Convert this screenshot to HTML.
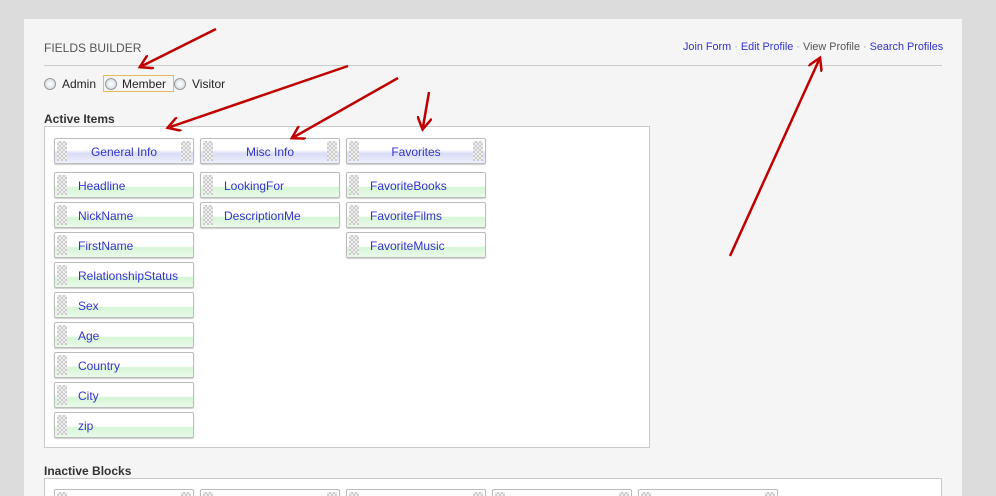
<!DOCTYPE html>
<html style="height:496px;overflow:hidden"><head><style>
body{margin:0;width:996px;height:496px;overflow:hidden;background:#dcdcdc;font-family:"Liberation Sans",sans-serif;position:relative}
.panel{position:absolute;left:24px;top:19px;width:938px;height:477px;background:#f5f5f5}
.t{position:absolute;font-size:12px}
.box{position:absolute;background:#fff;border:1px solid #c8c8c8}
.it{position:absolute;width:138px;height:24px;border:1px solid #bbb;border-radius:2px;box-shadow:0 1px 1px #ccc;font-size:12px;color:#3333cc;line-height:26px;background:linear-gradient(#fff 0%,#fff 55%,#d6f5d6 60%,#eafaea 100%)}
.it .h{position:absolute;left:2px;top:2px;width:10px;height:20px;background:repeating-conic-gradient(#ccc 0 25%,#eee 0 50%) 0 0/4px 4px}
.it span{position:absolute;left:23px}
.hd{background:linear-gradient(#fff 0%,#fff 45%,#d9dcf7 60%,#eef0fc 100%)}
.hd span{left:0;right:0;text-align:center}
.hd .h2{position:absolute;right:2px;top:2px;width:10px;height:20px;background:repeating-conic-gradient(#ccc 0 25%,#eee 0 50%) 0 0/4px 4px}
.rad{position:absolute;width:10px;height:10px;border:1px solid #999;border-radius:50%;background:radial-gradient(#fff,#cdd6e0)}
</style></head><body>
<div class="panel"></div>
<div class="t" style="left:44px;top:41px;color:#555;font-size:12px">FIELDS BUILDER</div>
<div class="t" style="left:683px;top:41px;font-size:10.85px;color:#999"><span style="color:#3333cc">Join Form</span> · <span style="color:#3333cc">Edit Profile</span> · <span style="color:#555">View Profile</span> · <span style="color:#3333cc">Search Profiles</span></div>
<div style="position:absolute;left:44px;top:65px;width:898px;height:1px;background:#ccc"></div>
<div style="position:absolute;left:103px;top:75px;width:69px;height:15px;border:1px solid #e8b860"></div>
<div class="rad" style="left:44px;top:78px"></div>
<div class="t" style="left:62px;top:77px;color:#222">Admin</div>
<div class="rad" style="left:105px;top:78px"></div>
<div class="t" style="left:122px;top:77px;color:#222">Member</div>
<div class="rad" style="left:174px;top:78px"></div>
<div class="t" style="left:192px;top:77px;color:#222">Visitor</div>
<div class="t" style="left:44px;top:112px;font-weight:bold;color:#333">Active Items</div>
<div class="box" style="left:44px;top:126px;width:604px;height:320px"></div>
<div class="it hd" style="left:54px;top:138px"><i class="h"></i><span>General Info</span><i class="h2"></i></div>
<div class="it hd" style="left:200px;top:138px"><i class="h"></i><span>Misc Info</span><i class="h2"></i></div>
<div class="it hd" style="left:346px;top:138px"><i class="h"></i><span>Favorites</span><i class="h2"></i></div>
<div class="it" style="left:54px;top:172px"><i class="h"></i><span>Headline</span></div>
<div class="it" style="left:54px;top:202px"><i class="h"></i><span>NickName</span></div>
<div class="it" style="left:54px;top:232px"><i class="h"></i><span>FirstName</span></div>
<div class="it" style="left:54px;top:262px"><i class="h"></i><span>RelationshipStatus</span></div>
<div class="it" style="left:54px;top:292px"><i class="h"></i><span>Sex</span></div>
<div class="it" style="left:54px;top:322px"><i class="h"></i><span>Age</span></div>
<div class="it" style="left:54px;top:352px"><i class="h"></i><span>Country</span></div>
<div class="it" style="left:54px;top:382px"><i class="h"></i><span>City</span></div>
<div class="it" style="left:54px;top:412px"><i class="h"></i><span>zip</span></div>
<div class="it" style="left:200px;top:172px"><i class="h"></i><span>LookingFor</span></div>
<div class="it" style="left:200px;top:202px"><i class="h"></i><span>DescriptionMe</span></div>
<div class="it" style="left:346px;top:172px"><i class="h"></i><span>FavoriteBooks</span></div>
<div class="it" style="left:346px;top:202px"><i class="h"></i><span>FavoriteFilms</span></div>
<div class="it" style="left:346px;top:232px"><i class="h"></i><span>FavoriteMusic</span></div>
<div class="t" style="left:44px;top:464px;font-weight:bold;color:#333">Inactive Blocks</div>
<div class="box" style="left:44px;top:478px;width:896px;height:40px"></div>
<div class="it hd" style="left:54px;top:489px"><i class="h"></i><i class="h2"></i></div>
<div class="it hd" style="left:200px;top:489px"><i class="h"></i><i class="h2"></i></div>
<div class="it hd" style="left:346px;top:489px"><i class="h"></i><i class="h2"></i></div>
<div class="it hd" style="left:492px;top:489px"><i class="h"></i><i class="h2"></i></div>
<div class="it hd" style="left:638px;top:489px"><i class="h"></i><i class="h2"></i></div>
<svg style="position:absolute;left:0;top:0" width="996" height="496">
<defs><marker id="a" markerWidth="6" markerHeight="6" refX="4" refY="3" orient="auto" markerUnits="strokeWidth"><path d="M0,0 L5,3 L0,6" fill="none" stroke="#c00000" stroke-width="1"/></marker></defs>
<g stroke="#c00000" stroke-width="2.5" fill="none" marker-end="url(#a)">
<line x1="216" y1="29" x2="142" y2="66"/>
<line x1="348" y1="66" x2="170" y2="127"/>
<line x1="398" y1="78" x2="294" y2="137"/>
<line x1="429" y1="92" x2="423" y2="127"/>
<line x1="730" y1="256" x2="819" y2="60"/>
</g></svg>
</body></html>
